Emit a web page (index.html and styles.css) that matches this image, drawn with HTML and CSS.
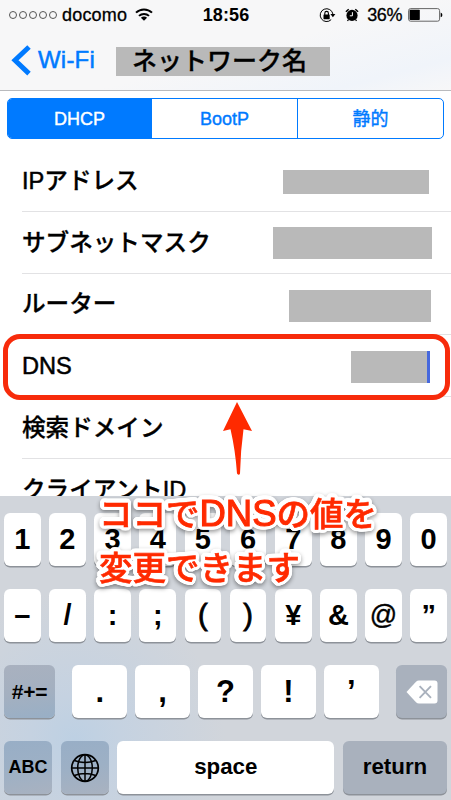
FILE: index.html
```html
<!DOCTYPE html>
<html lang="ja">

<head>
    <meta charset="UTF-8">
    <meta name="viewport" content="width=device-width, initial-scale=1.0">
    <title>Wi-Fi</title>
    <link rel="stylesheet" href="styles.css">
</head>

<body>
    <div class="phone">
        <div class="header">
            <div class="status">
                <div class="status-left">
                    <div class="signal"><i></i><i></i><i></i><i></i><i></i></div>
                    <span class="carrier">docomo</span>
                    <svg class="wifi" width="18" height="13" viewBox="0 0 18 13">
                        <g fill="none" stroke="#000" stroke-width="2">
                            <path d="M1 4.6C5.4.3 12.6.3 17 4.6" />
                            <path d="M4 7.9c2.8-2.7 7.2-2.7 10 0" />
                        </g>
                        <path d="M5.9 9.7c1.8-1.5 4.4-1.5 6.2 0L9 12.7z" />
                    </svg>
                </div>
                <span class="time">18:56</span>
                <div class="status-right">
                    <svg class="lock" width="17" height="15" viewBox="0 0 17 15">
                        <path d="M12.2 11.6A6.4 6.4 0 1 1 13.9 6" fill="none" stroke="#000" stroke-width="1" />
                        <path d="M11.4 6h5l-2.5 3.2z" />
                        <rect x="4.5" y="6.5" width="6.2" height="4.7" rx=".5" />
                        <path d="M5.8 7V5.2a1.8 1.8 0 0 1 3.6 0V7" fill="none" stroke="#000" stroke-width="1.1" />
                    </svg>
                    <svg class="alarm" width="14" height="14" viewBox="0 0 14 14">
                        <circle cx="7" cy="7.4" r="5.6" />
                        <path d="M.9 3.8L3.7 1.2M13.1 3.8L10.3 1.2" stroke="#000" stroke-width="1.5" />
                        <path d="M3.5 11.5L2.5 13M10.5 11.5l1 1.5" stroke="#000" stroke-width="1.3" />
                        <path d="M7.4 4.2v3.6H4.8" fill="none" stroke="#fff" stroke-width="1" />
                    </svg>
                    <span class="percent">36%</span>
                    <svg class="battery" width="35" height="14" viewBox="0 0 35 14">
                        <rect x=".6" y=".6" width="31" height="12.6" rx="2" fill="none" stroke="#666" />
                        <rect x="1.6" y="1.7" width="10.2" height="10.4" rx=".8" />
                        <path d="M32.7 4.6q1.7.6 1.7 2.3t-1.7 2.3z" />
                    </svg>
                </div>
            </div>
            <div class="nav">
                <svg class="chevron" width="20" height="31" viewBox="0 0 20 31">
                    <path d="M18 2L4 15.3 18 28.6" fill="none" stroke="#007aff" stroke-width="5" />
                </svg>
                <span class="back">Wi-Fi</span>
                <h1 class="title">ネットワーク名</h1>
            </div>
        </div>

        <div class="tabs">
            <div class="tab active">DHCP</div>
            <div class="tab">BootP</div>
            <div class="tab">静的</div>
        </div>

        <div class="list">
            <div class="row"><span class="label"><b>IP</b>アドレス</span><div class="mask mask-ip"></div></div>
            <div class="row"><span class="label">サブネットマスク</span><div class="mask mask-subnet"></div></div>
            <div class="row"><span class="label">ルーター</span><div class="mask mask-router"></div></div>
            <div class="row"><span class="label"><b>DNS</b></span><div class="mask mask-dns"></div></div>
            <div class="row"><span class="label">検索ドメイン</span></div>
            <div class="row"><span class="label">クライアント<b>ID</b></span></div>
        </div>

        <div class="keyboard">
            <div class="keys">
                <div class="key">1</div>
                <div class="key">2</div>
                <div class="key">3</div>
                <div class="key">4</div>
                <div class="key">5</div>
                <div class="key">6</div>
                <div class="key">7</div>
                <div class="key">8</div>
                <div class="key">9</div>
                <div class="key">0</div>
            </div>
            <div class="keys">
                <div class="key">–</div>
                <div class="key">/</div>
                <div class="key">:</div>
                <div class="key">;</div>
                <div class="key thin">(</div>
                <div class="key thin">)</div>
                <div class="key">¥</div>
                <div class="key">&amp;</div>
                <div class="key thin at">@</div>
                <div class="key">”</div>
            </div>
            <div class="keys keys-punct">
                <div class="key dark small">#+=</div>
                <div class="punct">
                    <div class="key big">.</div>
                    <div class="key big">,</div>
                    <div class="key big">?</div>
                    <div class="key big">!</div>
                    <div class="key big">’</div>
                </div>
                <div class="key dark plain">
                    <svg width="32" height="24" viewBox="0 0 32 24">
                        <path d="M.5 12L10 1.8Q11.3.5 13 .5h15.5q3 0 3 3v17q0 3-3 3H13q-1.7 0-3-1.3z" fill="#fff" />
                        <path d="M13.6 6.2l11.4 11.6M25 6.2L13.6 17.8" stroke="#a9b1bd" stroke-width="1.9" />
                    </svg>
                </div>
            </div>
            <div class="keys keys-bottom">
                <div class="key dark blue abc">ABC</div>
                <div class="key dark blue">
                    <svg width="30" height="30" viewBox="0 0 30 30" fill="none" stroke="#000" stroke-width="1.5">
                        <circle cx="15" cy="15" r="13.3" stroke-width="1.7" />
                        <ellipse cx="15" cy="15" rx="7.3" ry="13.3" />
                        <path d="M15 1.7v26.6M1.7 15h26.6M4.3 7.5q10.7 4 21.4 0M4.3 22.5q10.7-4 21.4 0" />
                    </svg>
                </div>
                <div class="key word">space</div>
                <div class="key dark plain word">return</div>
            </div>
        </div>

        <!-- annotation -->
        <div class="highlight"></div>
        <svg class="arrow" width="32" height="76" viewBox="0 0 32 76">
            <path d="M15 1L30 30l-8.5-1.8Q18.5 50 18 72.500q-1 2.500-3 0Q13.500 50 8.500 28.200L1 30z" fill="#ff2a00" />
        </svg>
        <p class="note">ココで<b>DNS</b>の値を<br>変更できます</p>
    </div>
</body>

</html>
```

FILE: styles.css
```css
* {
    box-sizing: border-box;
}

body {
    margin: 0;
    font-family: "Liberation Sans", "Noto Sans CJK JP", sans-serif;
    color: #000;
    background-color: #fff;
}

.phone {
    position: relative;
    display: flex;
    flex-direction: column;
    width: 451px;
    height: 800px;
    overflow: hidden;
}

.header {
    height: 91px;
    flex: none;
    background: linear-gradient(165deg, #f7f7f8 55%, #f0f4fa 85%, #f7f7f8);
    border-bottom: 1px solid #b9babd;
}

.status {
    display: grid;
    grid-template-columns: 1fr auto 1fr;
    align-items: center;
    height: 30px;
    padding: 0 8px 0 9px;
    font-size: 18px;
    -webkit-text-stroke: 0.3px #000;
}

.status-left,
.status-right {
    display: flex;
    align-items: center;
}

.status-right {
    justify-content: flex-end;
}

.signal {
    display: flex;
    gap: 2px;
}

.signal i {
    width: 8px;
    height: 8px;
    border: 1px solid #555;
    border-radius: 50%;
}

.carrier {
    margin-left: 5px;
    letter-spacing: 0.2px;
}

.wifi {
    margin: 0 0 1px 8px;
}

.time {
    font-weight: bold;
    letter-spacing: 0.1px;
    -webkit-text-stroke: 0;
}

.alarm {
    margin-left: 9px;
}

.percent {
    margin-left: 8px;
    letter-spacing: -0.4px;
}

.battery {
    margin-left: 6px;
}

.nav {
    display: flex;
    align-items: center;
    height: 60px;
    padding-left: 11px;
}

.back {
    margin-left: 7px;
    font-size: 24px;
    letter-spacing: 0.2px;
    color: #007aff;
    -webkit-text-stroke: 0.5px #007aff;
}

.title {
    width: 214px;
    height: 29px;
    margin: 2px 0 0 21px;
    padding-left: 16px;
    font-size: 25px;
    font-weight: 500;
    line-height: 28px;
    background-color: #b9b9b9;
    -webkit-text-stroke: 0.3px #000;
}

.tabs {
    display: flex;
    flex: none;
    height: 41px;
    margin: 7px 7px 0 7px;
    border: 1px solid #007aff;
    border-radius: 5px;
    overflow: hidden;
}

.tab {
    flex: 1;
    font-size: 18px;
    line-height: 40px;
    text-align: center;
    color: #007aff;
    -webkit-text-stroke: 0.4px currentColor;
}

.tab:first-child {
    flex: none;
    width: 143px;
}

.tab + .tab {
    border-left: 1px solid #007aff;
}

.tab.active {
    color: #fff;
    background-color: #007aff;
}

.list {
    flex: none;
    height: 357px;
    padding: 11px 0 0 22px;
    overflow: hidden;
}

.row {
    display: flex;
    align-items: center;
    justify-content: space-between;
    height: 61.8px;
    border-bottom: 1.5px solid #e2e2e4;
}

.label {
    padding-top: 1px;
    font-size: 23.6px;
    font-weight: 500;
    line-height: 36px;
    -webkit-text-stroke: 0.3px #000;
}

.label b {
    font-weight: normal;
    -webkit-text-stroke: 0.5px #000;
}

.mask {
    background-color: #b9b9b9;
}

.mask-ip {
    width: 146px;
    height: 24px;
    margin: 3px 22px 0 0;
}

.mask-subnet {
    width: 159px;
    height: 32px;
    margin: 2px 19px 0 0;
}

.mask-router {
    width: 142px;
    height: 32px;
    margin: 4px 20px 0 0;
}

.mask-dns {
    width: 79px;
    height: 32px;
    margin: 3px 21px 0 0;
    border-right: 3px solid #4668dd;
}

.keyboard {
    display: flex;
    flex-direction: column;
    flex: 1;
    gap: 23px;
    padding: 17px 4px 5px;
    background: radial-gradient(circle at 75px 245px, #bdd0e3 0, #c5d2e1 45px, #d1d5db 150px);
}

.keys {
    display: flex;
    gap: 8.6px;
    height: 53px;
}

.key {
    display: flex;
    flex: 1;
    align-items: center;
    justify-content: center;
    height: 53px;
    font-size: 29px;
    font-weight: bold;
    background-color: #fff;
    border-radius: 6px;
    box-shadow: 0 1.5px 0 #8d9299;
}

.key.thin {
    font-weight: normal;
    -webkit-text-stroke: 0.8px #000;
}

.key.at {
    font-size: 27px;
    -webkit-text-stroke: 0.4px #000;
}

.key.big {
    font-size: 31px;
}

.key.dark {
    background: linear-gradient(170deg, #a9b1bf, #a4b0c0 50%, #98afc6);
}

.key.dark.blue {
    background: linear-gradient(170deg, #98aec6, #9db0c5 50%, #a9b2c0);
}

.key.dark.plain {
    background: #a9b1bd;
}

.key.small {
    font-size: 21px;
    letter-spacing: -0.3px;
}

.key.abc {
    font-size: 18px;
}

.key.word {
    padding-bottom: 2px;
    font-size: 22.3px;
}

.keys-punct {
    gap: 17px;
}

.keys-punct > .key {
    flex: none;
    width: 51px;
}

.punct {
    display: flex;
    flex: 1;
    gap: 7.5px;
}

.keys-bottom {
    display: grid;
    grid-template-columns: 48px 48px 1fr 104px;
}

.highlight {
    position: absolute;
    top: 334px;
    left: 3px;
    width: 447px;
    height: 66px;
    border: 5px solid #f72b0b;
    border-radius: 17px;
}

.arrow {
    position: absolute;
    top: 401px;
    left: 222px;
}

/* white outline first, then the soft shadow under it */
.note {
    position: absolute;
    top: 488px;
    left: 99px;
    margin: 0;
    font-size: 33.5px;
    font-weight: 500;
    line-height: 54px;
    white-space: nowrap;
    color: #ff2a00;
    -webkit-text-stroke: 0.6px #ff2a00;
    filter: drop-shadow(1.5px 0 0 #fff) drop-shadow(-1.5px 0 0 #fff) drop-shadow(0 1.5px 0 #fff) drop-shadow(0 -1.5px 0 #fff) drop-shadow(1px 1px 0 #fff) drop-shadow(-1px -1px 0 #fff) drop-shadow(1px -1px 0 #fff) drop-shadow(-1px 1px 0 #fff) drop-shadow(0 2px 2px rgba(0, 0, 0, 0.4));
}

.note b {
    font-size: 36.5px;
    font-weight: normal;
    line-height: 1;
    -webkit-text-stroke: 1.1px #ff2a00;
}
```
